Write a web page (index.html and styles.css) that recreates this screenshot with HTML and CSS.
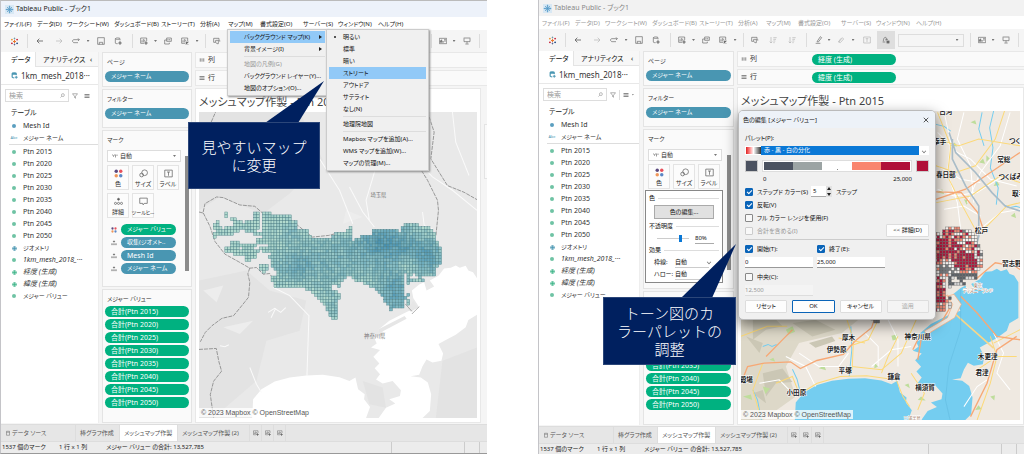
FILE: index.html
```html
<!DOCTYPE html>
<html lang="ja">
<head>
<meta charset="utf-8">
<title>Tableau Public - ブック1</title>
<link rel="stylesheet" href="styles.css">
</head>
<body>
<svg class="defs" aria-hidden="true">
  <symbol id="logo" viewBox="0 0 12 12"><g stroke-width="1.3" fill="none"><path d="M6 4v4M4 6h4" stroke="#e8762c"/><path d="M6 .8v2.4M5 2h2" stroke="#7099a5"/><path d="M6 8.8v2.4M5 10h2" stroke="#5b6591"/><path d="M2.5 2.5v2M1.5 3.5h2" stroke="#eb912c"/><path d="M9.5 2.5v2M8.500 3.500h2" stroke="#c72035"/><path d="M2.500 7.500v2M1.500 8.500h2" stroke="#c72035"/><path d="M9.500 7.500v2M8.500 8.500h2" stroke="#1f457e"/></g></symbol>
  <symbol id="app" viewBox="0 0 12 12"><path d="M0 0h12v12H0z" fill="#d8e8f4" stroke="none"/><g stroke="#4f97c5" fill="none"><circle cx="6" cy="6" r="3.500" stroke-dasharray="1.500 1"/><path d="M6 1v10M1 6h10M3 3l6 6M9 3l-6 6"/></g></symbol>
  <symbol id="back" viewBox="0 0 12 12"><path d="M10.500 6h-9M5 2.500L1.500 6 5 9.500" stroke-width="1.300"/></symbol>
  <symbol id="fwd" viewBox="0 0 12 12"><path d="M1.500 6h9M7 2.500L10.500 6 7 9.500"/></symbol>
  <symbol id="replay" viewBox="0 0 12 12"><path d="M9 8.500H2.500L1 7V5l1.500-1H11M9 2l2 2-2 2"/></symbol>
  <symbol id="save" viewBox="0 0 12 12"><path d="M1 1h10v10H1zM3.500 11V8h5v3"/></symbol>
  <symbol id="datasrc" viewBox="0 0 12 12"><path d="M9 5V2.500C9 1 2 1 2 2.500V9c0 1 2 1 3.500 1M2 2.500C2 4 9 4 9 2.500"/><path d="M9 6.500v5M6.500 9h5" stroke-width="1.600"/></symbol>
  <symbol id="newsheet" viewBox="0 0 12 12"><path d="M6 9.500H1v-8h9V6M3 8V5M5 8V3M7 7V4"/><path d="M9 6.500v5M6.500 9h5" stroke-width="1.600"/></symbol>
  <symbol id="dup" viewBox="0 0 12 12"><path d="M4 1.500h7v5H4zM1 4.500v6h7v-2M1 4.500h3M6 5V3M8.500 5V3"/></symbol>
  <symbol id="clear" viewBox="0 0 12 12"><path d="M6 9.500H1v-8h9V6M3 8V5M5 8V3M7 6V4"/><path d="M7 7l4 4M11 7l-4 4" stroke-width="1.600"/></symbol>
  <symbol id="swap" viewBox="0 0 12 12"><path d="M1 2h8v4M1 2v6h3M4 5h4v5H6L4 8zM9 6l2 0"/></symbol>
  <symbol id="sort" viewBox="0 0 12 12"><path d="M3 1.500v9M1 8.500l2 2 2-2M6.500 2.500h5M6.500 5h4M6.500 7.500h3M6.500 10h2"/></symbol>
  <symbol id="pen" viewBox="0 0 12 12"><path d="M1 11h7M3 8.500L8 1l2 1.500L5 9z"/></symbol>
  <symbol id="clip" viewBox="0 0 12 12"><path d="M3 9L8 2.500l2 2L5 10 2 9l4-5.500"/></symbol>
  <symbol id="tbox" viewBox="0 0 12 12"><path d="M1 1.500h10v9H1zM4 4h4M6 4v5"/></symbol>
  <symbol id="fix" viewBox="0 0 12 12"><path d="M2 8c0-3 1-6 3-6s2 3 1 5M1 9h4M5 5h4"/><path d="M7 7l4 4M11 7l-4 4" stroke-width="2"/></symbol>
  <symbol id="cards" viewBox="0 0 12 12"><path d="M.5 2h11v8H.5z"/><path d="M2 8.500V5M4 8.500V4M6 8.500V6M8 4h2M8 6h2" stroke-width="1.500"/></symbol>
  <symbol id="present" viewBox="0 0 12 12"><path d="M1 1.500h10M1.500 2v5h9V2M6 7v3M3.500 10.500h5"/></symbol>
  <symbol id="filter" viewBox="0 0 12 12"><path d="M1 1.500h10L7 6.500v4l-2-1.500V6.500z"/></symbol>
  <symbol id="search" viewBox="0 0 12 12"><circle cx="7" cy="5" r="3.500"/><path d="M4.500 7.500L1 11"/></symbol>
  <symbol id="listico" viewBox="0 0 12 12"><path d="M1 3h10M1 6h10M1 9h10" stroke-width="1.500"/></symbol>
  <symbol id="colico" viewBox="0 0 12 12"><path d="M2.500 3v6M6 3v6M9.500 3v6" stroke-width="2" stroke-dasharray="2.500 1"/></symbol>
  <symbol id="dots4" viewBox="0 0 12 12"><g stroke="none"><circle cx="3" cy="3" r="2.300" fill="#5b4a7f"/><circle cx="9" cy="3" r="2.300" fill="#e8505b"/><circle cx="3" cy="9" r="2.300" fill="#f0975a"/><circle cx="9" cy="9" r="2.300" fill="#5a86c5"/></g></symbol>
  <symbol id="size" viewBox="0 0 12 12"><circle cx="7.500" cy="5" r="3.800"/><circle cx="3.500" cy="8" r="2.500"/></symbol>
  <symbol id="detail" viewBox="0 0 12 12"><circle cx="6" cy="3" r="1.300" fill="#555"/><circle cx="2" cy="8.500" r="1.400"/><circle cx="6" cy="8.500" r="1.400"/><circle cx="10" cy="8.500" r="1.400"/></symbol>
  <symbol id="tip" viewBox="0 0 12 12"><path d="M1 1.500h10v7H7L5.500 10.500 5 8.500H1z"/></symbol>
  <symbol id="auto" viewBox="0 0 12 12"><path d="M1 3l2 4 2-4M7 9V3M10 3v3" stroke-width="1.300"/></symbol>
  <symbol id="globe" viewBox="0 0 12 12"><circle cx="6" cy="6" r="4.500"/><path d="M1.500 6h9M6 1.500v9"/></symbol>
  <symbol id="cyl" viewBox="0 0 12 12"><path d="M3 2.500h6v8H3zM3 4.500h6"/></symbol>
</svg>

<main class="desk">

<!-- ================= map menu ================= -->
<section class="win first">
  <header class="titlebar"><svg class="i9"><use href="#app"/></svg>Tableau Public - ブック1</header>
  <nav class="menubar"><span class="mn1">ファイル(F)</span><span class="mn2">データ(D)</span><span class="mn3">ワークシート(W)</span><span class="mn4">ダッシュボード(B)</span><span class="mn5">ストーリー(T)</span><span class="mn6">分析(A)</span><span class="mn7">マップ(M)</span><span class="mn8">書式設定(O)</span><span class="mn9">サーバー(S)</span><span class="mn10">ウィンドウ(N)</span><span>ヘルプ(H)</span></nav>
  <div class="toolbar">
    <svg class="i9"><use href="#logo"/></svg><i class="sep"></i><svg><use href="#back"/></svg><svg class="dim"><use href="#fwd"/></svg><svg><use href="#replay"/></svg><i class="caret"></i><svg><use href="#save"/></svg><svg><use href="#datasrc"/></svg><i class="sep"></i><svg><use href="#newsheet"/></svg><i class="caret"></i><svg><use href="#dup"/></svg><svg><use href="#clear"/></svg><i class="caret"></i><i class="sep"></i><svg><use href="#swap"/></svg><svg class="dim"><use href="#sort"/></svg><svg class="dim"><use href="#sort"/></svg><i class="sep"></i><svg><use href="#pen"/></svg><i class="caret"></i><svg class="dim"><use href="#clip"/></svg><i class="caret"></i><svg class="dim"><use href="#tbox"/></svg><svg><use href="#fix"/></svg><span class="combo"></span><i class="sep"></i><svg><use href="#cards"/></svg><i class="caret"></i><svg><use href="#present"/></svg><i class="sep"></i>
  </div>
  <div class="work">
    <aside class="data">
      <div class="dtabs"><b>データ</b><span>アナリティクス</span><em>‹</em></div>
      <div class="source"><svg class="i7 blue"><use href="#datasrc"/></svg>1km_mesh_2018···</div>
      <div class="find"><div class="searchbox"><input type="text" placeholder="検索" aria-label="検索"><svg class="i5"><use href="#search"/></svg></div><svg class="i6"><use href="#filter"/></svg><i class="bar"></i><svg class="i6"><use href="#listico"/></svg><i class="caret"></i></div>
      <h2>テーブル</h2>
      <ul class="fields dims"><li><i class="dot bl"></i>Mesh Id</li><li class="kana"><small>Abc</small>メジャー ネーム</li></ul>
      <ul class="fields"><li><i class="dot"></i>Ptn 2015</li><li><i class="dot"></i>Ptn 2020</li><li><i class="dot"></i>Ptn 2025</li><li><i class="dot"></i>Ptn 2030</li><li><i class="dot"></i>Ptn 2035</li><li><i class="dot"></i>Ptn 2040</li><li><i class="dot"></i>Ptn 2045</li><li><i class="dot"></i>Ptn 2050</li><li class="kana"><svg class="i5 blue"><use href="#globe"/></svg>ジオメトリ</li><li class="it"><i class="dot"></i>1km_mesh_2018_···</li><li class="it"><svg class="i5 green"><use href="#globe"/></svg>経度 (生成)</li><li class="it"><svg class="i5 green"><use href="#globe"/></svg>緯度 (生成)</li><li class="kana"><i class="dot"></i>メジャー バリュー</li></ul>
    </aside>
    <div class="cards">
      <section class="card"><h3>ページ</h3><span class="pill bl">メジャー ネーム</span></section>
      <section class="card filt"><h3>フィルター</h3><span class="pill bl">メジャー ネーム</span></section>
      <section class="card marks"><h3>マーク</h3>
        <div class="mbody">
          <label class="mtype"><svg class="i6"><use href="#auto"/></svg><select aria-label="マークの種類"><option>自動</option></select><i class="caret"></i></label>
          <div class="mbtns"><button><svg><use href="#dots4"/></svg>色</button><button><svg><use href="#size"/></svg>サイズ</button><button><svg><use href="#tbox"/></svg>ラベル</button><button><svg><use href="#detail"/></svg>詳細</button><button class="long"><svg><use href="#tip"/></svg>ツールヒ…</button></div>
          <ul class="mpills"><li><svg class="i6"><use href="#dots4"/></svg><span class="pill">メジャー バリュー</span></li><li><svg class="i6"><use href="#detail"/></svg><span class="pill bl">収集(ジオメト..</span></li><li><svg class="i6"><use href="#detail"/></svg><span class="pill bl lat">Mesh Id</span></li><li><svg class="i6"><use href="#detail"/></svg><span class="pill bl">メジャー ネーム</span></li></ul>
        </div>
        <i class="scroll"></i>
      </section>
      <section class="card values"><h3>メジャー バリュー</h3><span class="pill lat">合計(Ptn 2015)</span><span class="pill lat">合計(Ptn 2020)</span><span class="pill lat">合計(Ptn 2025)</span><span class="pill lat">合計(Ptn 2030)</span><span class="pill lat">合計(Ptn 2035)</span><span class="pill lat">合計(Ptn 2040)</span><span class="pill lat">合計(Ptn 2045)</span><span class="pill lat">合計(Ptn 2050)</span></section>
    </div>
    <div class="view">
      <div class="shelf"><svg class="i6"><use href="#colico"/></svg>列</div>
      <div class="shelf"><svg class="i6"><use href="#listico"/></svg>行</div>
      <div class="viewrow">
        <section class="sheet"><h1>メッシュマップ作製 - Ptn 2015</h1>
          <div class="mapbox">
            <svg class="map gray" viewBox="27 -204 837 915" preserveAspectRatio="none">
              <defs>
                <g id="sea"><path d="M865 295L852 275 838 270 830 256 812 262 800 255 785 262 765 264 748 286 722 300 735 318 712 330 705 305 690 312 668 330 672 352 690 380 660 390 640 400 600 420 566 448 590 456 555 472 562 488 545 500 572 508 552 528 570 548 556 562 572 580 560 596 580 608 610 600 635 628 632 645 600 655 618 668 590 680 568 711H700L722 690 726 640 716 605 695 590 664 586 690 582 700 556 712 536 730 545 757 540 762 518 748 490 770 478 800 462 830 440 838 418 865 402z"/><path d="M187 711L190 655 215 625 255 602 300 590 350 584 400 582 450 589 480 600 498 590 506 625 526 640 524 655 542 678 530 711z"/></g>
                <path id="tama" d="M655 385l10 8 20-12-12-20-8 10zM566 446l80-40 6 8-80 42z"/>
              </defs>
              <rect x="27" y="-204" width="837" height="915" fill="#e9e9e9"/>
              <g fill="#e3e3e3"><path d="M27-204H330L400-60 300 40 220 100 90 50 27 90zM27 300L170 270 240 330 350 360 330 450 230 480 200 600 70 711H27zM760 540L864 500V711H740zM520 600l60 20 10 60-50-10z"/></g>
              <g fill="#ededed"><path d="M40 330l60-15-20 50zM100 440l90-20-40 40zM620-150l80 40-30 60zM470 90l50 20-60 20z"/></g>
              <use href="#sea" fill="#fff"/><use href="#tama" fill="#e6e6e6"/>
              <g fill="none" stroke="#fafafa" stroke-width="3"><path d="M250 320L300 345 358 405 352 585M480 20L520 95 555 140M560-40l-30 100 10 60M700 95l5 40 25 10M180 560l20 50 15 25M235 395l20-12 18 12 15-14M258 383l-14 28M90 495l15 3 12-6M650-190l20 120 60 60 60 40 74 60M380-80l70 110 40 100M790-204l10 90 40 100"/></g>
              <g fill="none" stroke="#888" stroke-width="2.500" stroke-dasharray="12 3"><path d="M27-150l35-20 15-34M27 95l12 3 6-28 35-20 20 2 50 22 45 4 30 26M40 98l20 40 15 45 30 38 40 22 35 20 20-2 20 20 20-2 20 35 30 2M180 262l-6 18 6 25-4 45-20 25-25 30-35 8-30 22-20 20-15 28M27 506l52-3 8 40 8 28-24 30-10 40 10 69M318 130l50 40 50-5 30-8M665-80l50 80 30 60 3 30-8 78M715-204l20 60-10 80 50 80 50 20 39 22"/></g>
              <path d="M648 370l20 22M690 378l-22 22" stroke="#888" stroke-width="2"/>
              <g class="mesh" data-palette="teal"></g>
              <text x="543" y="49" class="glabel">埼玉県</text><text x="524" y="473" class="glabel">神奈川県</text>
            </svg>
            <small class="credit">© 2023 Mapbox © OpenStreetMap</small>
          </div>
        </section>
        <div class="side"><i></i></div>
      </div>
    </div>
  </div>
  <footer class="tabs"><span class="ds"><svg class="i6"><use href="#cyl"/></svg>データ ソース</span><span class="t1">棒グラフ作成</span><span class="on">メッシュマップ作製</span><span class="t3">メッシュマップ作製 (2)</span><span class="new"><svg><use href="#newsheet"/></svg></span><span class="new"><svg><use href="#newsheet"/></svg></span><span class="new"><svg><use href="#newsheet"/></svg></span></footer>
  <footer class="status"><span>1537 個のマーク</span><span>1 行 x 1 列</span><span>メジャー バリュー の合計: 13,527,785</span><i></i><i></i><i></i></footer>

  <div class="menu main"><button class="hot">バックグラウンド マップ(K)<em></em></button><button>背景イメージ(I)<em></em></button><hr><button disabled>地図の凡例(G)</button><button>バックグラウンド レイヤー(Y)...</button><button>地図のオプション(O)...</button></div>
  <div class="menu sub"><button class="cur">明るい</button><button>標準</button><button>暗い</button><button class="hot">ストリート</button><button>アウトドア</button><button>サテライト</button><button>なし(N)</button><hr><button>地理院地図</button><hr><button>Mapbox マップを追加(A)...</button><button>WMS マップを追加(W)...</button><button>マップの管理(M)...</button></div>
  <svg class="pointer p1" viewBox="0 0 60 42"><path d="M0 42L59 0 33 42z"/></svg>
  <p class="callout c1">見やすいマップ<br>に変更</p>
</section>

<!-- ================= colour dialog ================= -->
<section class="win second">
  <header class="titlebar"><svg class="i9"><use href="#app"/></svg>Tableau Public - ブック1</header>
  <nav class="menubar"><span class="mn1">ファイル(F)</span><span class="mn2">データ(D)</span><span class="mn3">ワークシート(W)</span><span class="mn4">ダッシュボード(B)</span><span class="mn5">ストーリー(T)</span><span class="mn6">分析(A)</span><span class="mn7">マップ(M)</span><span class="mn8">書式設定(O)</span><span class="mn9">サーバー(S)</span><span class="mn10">ウィンドウ(N)</span><span>ヘルプ(H)</span></nav>
  <div class="toolbar">
    <svg class="i9"><use href="#logo"/></svg><i class="sep"></i><svg><use href="#back"/></svg><svg class="dim"><use href="#fwd"/></svg><svg><use href="#replay"/></svg><i class="caret"></i><svg><use href="#save"/></svg><svg><use href="#datasrc"/></svg><i class="sep"></i><svg><use href="#newsheet"/></svg><i class="caret"></i><svg><use href="#dup"/></svg><svg><use href="#clear"/></svg><i class="caret"></i><i class="sep"></i><svg><use href="#swap"/></svg><svg class="dim"><use href="#sort"/></svg><svg class="dim"><use href="#sort"/></svg><i class="sep"></i><svg><use href="#pen"/></svg><i class="caret"></i><svg class="dim"><use href="#clip"/></svg><i class="caret"></i><svg class="dim"><use href="#tbox"/></svg><span class="picked"><svg><use href="#fix"/></svg></span><span class="combo"><i class="caret"></i></span><i class="sep"></i><svg><use href="#cards"/></svg><i class="caret"></i><svg><use href="#present"/></svg><i class="sep"></i>
  </div>
  <div class="work">
    <aside class="data">
      <div class="dtabs"><b>データ</b><span>アナリティクス</span><em>‹</em></div>
      <div class="source"><svg class="i7 blue"><use href="#datasrc"/></svg>1km_mesh_2018···</div>
      <div class="find"><div class="searchbox"><input type="text" placeholder="検索" aria-label="検索"><svg class="i5"><use href="#search"/></svg></div><svg class="i6"><use href="#filter"/></svg><i class="bar"></i><svg class="i6"><use href="#listico"/></svg><i class="caret"></i></div>
      <h2>テーブル</h2>
      <ul class="fields dims"><li><i class="dot bl"></i>Mesh Id</li><li class="kana"><small>Abc</small>メジャー ネーム</li></ul>
      <ul class="fields"><li><i class="dot"></i>Ptn 2015</li><li><i class="dot"></i>Ptn 2020</li><li><i class="dot"></i>Ptn 2025</li><li><i class="dot"></i>Ptn 2030</li><li><i class="dot"></i>Ptn 2035</li><li><i class="dot"></i>Ptn 2040</li><li><i class="dot"></i>Ptn 2045</li><li><i class="dot"></i>Ptn 2050</li><li class="kana"><svg class="i5 blue"><use href="#globe"/></svg>ジオメトリ</li><li class="it"><i class="dot"></i>1km_mesh_2018_···</li><li class="it"><svg class="i5 green"><use href="#globe"/></svg>経度 (生成)</li><li class="it"><svg class="i5 green"><use href="#globe"/></svg>緯度 (生成)</li><li class="kana"><i class="dot"></i>メジャー バリュー</li></ul>
    </aside>
    <div class="cards">
      <section class="card"><h3>ページ</h3><span class="pill bl">メジャー ネーム</span></section>
      <section class="card filt"><h3>フィルター</h3><span class="pill bl">メジャー ネーム</span></section>
      <section class="card marks"><h3>マーク</h3>
        <div class="mbody">
          <label class="mtype"><svg class="i6"><use href="#auto"/></svg><select aria-label="マークの種類"><option>自動</option></select><i class="caret"></i></label>
          <div class="mbtns"><button><svg><use href="#dots4"/></svg>色</button><button><svg><use href="#size"/></svg>サイズ</button><button><svg><use href="#tbox"/></svg>ラベル</button></div>
        </div>
        <i class="scroll"></i>
      </section>
      <section class="card values"><h3>メジャー バリュー</h3><span class="pill lat">合計(Ptn 2015)</span><span class="pill lat">合計(Ptn 2020)</span><span class="pill lat">合計(Ptn 2025)</span><span class="pill lat">合計(Ptn 2030)</span><span class="pill lat">合計(Ptn 2035)</span><span class="pill lat">合計(Ptn 2040)</span><span class="pill lat">合計(Ptn 2045)</span><span class="pill lat">合計(Ptn 2050)</span></section>
    </div>
    <div class="view">
      <div class="shelf"><svg class="i6"><use href="#colico"/></svg>列<span class="pill lat">経度 (生成)</span></div>
      <div class="shelf"><svg class="i6"><use href="#listico"/></svg>行<span class="pill lat">緯度 (生成)</span></div>
      <div class="viewrow">
        <section class="sheet"><h1>メッシュマップ作製 - Ptn 2015</h1>
          <div class="mapbox">
            <svg class="map" viewBox="24 -564 846 924" preserveAspectRatio="none">
              <rect x="24" y="-564" width="846" height="924" fill="#efe9e1"/>
              <path d="M24-50H420L380 60 330 100 200 130 160 200 190 290 90 360H24z" fill="#ddd8c8"/>
              <g fill="#cbc7b5"><path d="M60 60l60-10 30 30-50 10-40 30zM180 70l70-10 60 30-70 20zM40 110l50 20-10 30zM230 130l70-20 10 14-60 20zM90 220l60-14 30 40-50 4-30 40zM60 280l30-10 10 40z"/></g>
              <g fill="#bedd9b"><path d="M160 90l20-10 8 16-20 8zM260 205l16-8 6 14zM90 260l22 6-14 16zM480 108l16-4 4 14-16 4zM430 190l10 10-12 6zM30 290l24-6 4 16zM620-320l14-10 6 14zM746-410l12-12 6 16zM768-432l10 10-10 10zM700-300l16 4-8 12zM842-250l12-10 4 16zM790-340l10-16 8 14zM660-460l12-10 8 12zM720-530l14-6 4 12zM560 300l10-10 14 12zM520 255l12-4 4 14zM780 290l14-4-2 16zM734 330l10-14 10 12zM110 180l12-6 6 12z"/></g>
              <use href="#sea" fill="#74cdf0" transform="translate(0 -347)"/>
              <g fill="none" stroke="#74cdf0" stroke-width="3"><path d="M357 80L360 150 352 230M180 208l14 30 10 40M60 270l14 30 12 60M90 140l16-6 12 6 14-6M822-283l16 8 20-4 12 4M790-564l-12 50 10 60-8 60 24 60-6 50M590-530l50 12 20 14M755-560l-10 50 16 50"/></g>
              <g fill="none" stroke="#fff" stroke-width="3"><path d="M620-500l60 60 40 20 60 60 80 20M620-400l70 40 60 10M640-560l20 90-10 90 30 90 10 80M700-560l-20 80 40 80 10 110M620-330l50 20 70-10 80-50M840-560l-30 100-60 80-40 90M760-220l50-40 60-10M200 160l60 40 60 0 30-40M250 260l-30-60-60-30M400 100l40 40 0 60M470 60l30 60 0 80M420 200l60-50 60-10M640-270l60-10 50 30M700 320l40-60 30-20M790 100l30 60-20 60 40 50M80 250l60-10 30 30 20 20"/></g>
              <g fill="none" stroke="#fcd978" stroke-width="3"><path d="M205 280l50-30 70-20 80-2 60 8 30 4 20 50 20 30M345 60l20 60-4 90M360 200l90 10 60-50 50-110M440 60l-30 60-60 20M500 110l-30 60-20 50M615-480l70 20 60-20 125 20M620-560l40 100-10 90 40 80 50 90M870-350l-60-20-90 60-104 20M615-400l60 20 60-20 60-80 30-90M130 250l50-20 20 50M90 190l-30 80 20 70M740 360l40-110 20-80-20-60M790 130l80-40M740 210l60-40 60 0M560 330l20-50-40-60M720-190l50-30 60-60 40-10M24 110l80-30 60 0M320 115l80 15"/></g>
              <g fill="none" stroke="#f7a875" stroke-width="4"><path d="M24 250l20-50 50-10 80-4 30 20 50-24 80-18 36-40 50-40 20-60M616-322l76 2 50 60 20 60M615-300l90-30 90-60 75-50M735-60l60-50 60 10 15 10M560 180l10-60 60-50 30-50M690-10l50 50 60 70 70 10M720 350l50-100 30-100 60-40M545 150l20-40M180 90l-20 20-60 60"/></g>
              <g fill="none" stroke="#a9bcc8" stroke-width="5"><path d="M655-500l20 60 60 60 50 60 40 40 45 15M665-480l0 60 40 80 40 60 0 90-16 60"/></g>
              <path d="M672 42L790 145" stroke="#f7d68a" stroke-width="5"/>
              <path d="M690-30v120l-36 110-10 100 14 60" fill="none" stroke="#5fb9dc" stroke-width="1.500"/>
              <g fill="#efe9e1" stroke="#f7a875" stroke-width="2"><path d="M580 94l70-40 16-40-16-24 20-6 22 30-20 40-84 50zM640 20l20-20-10-14-14 10z"/></g>
              <g class="mesh" data-palette="red" transform="translate(0 -347)"></g>
              <g class="places" text-anchor="middle">
                <text x="645" y="-556">古河</text><text x="627" y="-466">幸手</text><text x="645" y="-368">春日部</text><text x="821" y="-413">常総</text><text x="864" y="-467">つくば</text><text x="860" y="-360">つくばみらい</text><text x="866" y="-311">取手</text><text x="753" y="-198">松戸</text><text x="845" y="-101">習志野</text>
                <text x="350" y="121">厚木</text><text x="314" y="157">伊勢原</text><text x="340" y="220">平塚</text><text x="488" y="236">鎌倉</text><text x="582" y="270">横須賀</text><text x="192" y="285">小田原</text><text x="30" y="245">御殿場</text><text x="560" y="118">神奈川県</text><text x="772" y="178">木更津</text><text x="755" y="225">君津</text>
                <text x="742" y="-39" class="poi">東京</text><text x="742" y="-23" class="poi">ディズニーランド</text><text x="543" y="359" class="poi">三浦半島</text>
              </g>
            </svg>
            <small class="credit">© 2023 Mapbox © OpenStreetMap</small>
          </div>
        </section>
      </div>
    </div>
  </div>
  <footer class="tabs"><span class="ds"><svg class="i6"><use href="#cyl"/></svg>データ ソース</span><span class="t1">棒グラフ作成</span><span class="on">メッシュマップ作製</span><span class="t3">メッシュマップ作製 (2)</span><span class="new"><svg><use href="#newsheet"/></svg></span><span class="new"><svg><use href="#newsheet"/></svg></span><span class="new"><svg><use href="#newsheet"/></svg></span></footer>
  <footer class="status"><span>1537 個のマーク</span><span>1 行 x 1 列</span><span>メジャー バリュー の合計: 13,527,785</span><i></i><i></i><i></i></footer>

  <div class="popup">
    <div class="legend">色</div>
    <button class="edit">色の編集...</button>
    <div class="legend"><label for="op">不透明度</label></div>
    <div class="oprow"><input id="op" type="range" value="75"><input type="text" value="80%" aria-label="不透明度の値"></div>
    <div class="legend">効果</div>
    <div class="fx"><label for="bd">枠線:</label><select id="bd"><option>自動</option></select><i class="chev"></i></div>
    <div class="fx"><label for="ha">ハロー:</label><select id="ha"><option>自動</option></select><i class="chev"></i></div>
  </div>

  <div class="dialog" role="dialog" aria-labelledby="dt">
    <header><span id="dt">色の編集 [メジャー バリュー]</span><button aria-label="閉じる"><svg viewBox="0 0 8 8"><path d="M1 1l6 6M7 1L1 7"/></svg></button></header>
    <div class="dbody">
      <label for="pal">パレット(P):</label>
      <div class="palette"><i class="ramp"></i><select id="pal"><option>赤 - 黒 - 白の分化</option></select><i class="chev"></i></div>
      <div class="swatches"><i class="lo"></i><div class="steps"><i></i><i></i><i></i><i></i><i></i></div><i class="hi"></i></div>
      <div class="limits"><span>0</span><span>25,000</span></div>
      <div class="checks">
        <div><label><input type="checkbox" checked>ステップド カラー(S)</label><input class="num" type="number" value="5" aria-label="ステップ数"><i class="spin"></i><span>ステップ</span></div>
        <div><label><input type="checkbox" checked>反転(V)</label></div>
        <div><label><input type="checkbox">フル カラー レンジを使用(F)</label></div>
        <div><label class="off"><input type="checkbox" disabled>合計を含める(I)</label><button class="btn">&lt;&lt; 詳細(D)</button></div>
      </div>
      <hr>
      <div class="range">
        <label><input type="checkbox" checked>開始(T):</label><label><input type="checkbox" checked>終了(E):</label>
        <input type="text" value="0" aria-label="開始"><input type="text" value="25,000" aria-label="終了">
        <label><input type="checkbox">中央(C):</label><span></span>
        <input type="text" value="12,500" disabled aria-label="中央">
      </div>
      <div class="actions"><button class="btn">リセット</button><button class="btn ok">OK</button><button class="btn">キャンセル</button><button class="btn" disabled>適用</button></div>
    </div>
  </div>
  <svg class="pointer p2" viewBox="0 0 56 54"><path d="M0 54L55 0 31 54z"/></svg>
  <p class="callout c2">トーン図のカ<br>ラーパレットの<br>調整</p>
</section>
</main>
<script src="mesh.js"></script>
</body>
</html>
```
FILE: styles.css
```css
* { box-sizing: border-box; }
body, h1, h2, h3, p, ul { margin: 0; padding: 0; font-weight: 400; }
ul { list-style: none; }
body {
  background: #fff;
  color: #333;
  font: 6px/12px "Noto Sans", "Noto Sans CJK JP", sans-serif;
  font-feature-settings: "palt";
}
button, input, select {
  font: inherit;
  font-feature-settings: inherit;
  color: inherit;
  margin: 0;
  padding: 0;
  border: 0;
  border-radius: 0;
  background: none;
  appearance: none;
  min-width: 0;
}
i, em { font-style: normal; }
svg { display: block; fill: none; stroke: #666; width: 8px; height: 8px; flex: none; }
.defs { position: absolute; width: 0; height: 0; }
.i5 { width: 5px; height: 5px; }
.i6 { width: 6px; height: 6px; }
.i7 { width: 7px; height: 7px; }
.i9 { width: 9px; height: 9px; }
.blue { stroke: #4996b2; stroke-width: 2; }
.green { stroke: #3eb489; stroke-width: 2; }
.dim { opacity: .45; }
.caret {
  width: 3px;
  height: 2px;
  background: #777;
  clip-path: polygon(0 0, 100% 0, 50% 100%);
}

.desk { display: grid; grid-template-columns: 487fr 51px 486fr; min-height: 100vh; }
.win {
  position: relative;
  display: flex;
  flex-direction: column;
  background: #f5f5f5;
  border-left: 1px solid #c4c4c8;
  white-space: nowrap;
}
.first { border-top: 1px solid #bbb; border-bottom: 1px solid #999; }
.second { grid-column: 3; }

.titlebar { display: flex; align-items: center; gap: 2px; height: 16px; padding-left: 4px; background: #edf2fa; color: #222; font-size: 7px; }
.second .titlebar { background: #f2f2f2; color: #888; }
.menubar { display: flex; align-items: center; height: 13px; padding-left: 3px; background: #fff; color: #222; }
.second .menubar { color: #999; }
.menubar span { flex: none; }
.mn1 { width: 33px; }
.mn2 { width: 30px; }
.mn3, .mn4 { width: 47px; }
.mn5 { width: 39px; }
.mn6 { width: 28px; }
.mn7 { width: 32px; }
.mn8 { width: 43px; }
.mn9 { width: 35px; }
.mn10 { width: 40px; }

.toolbar {
  display: grid;
  grid-template-columns: 18px 8px 18px 19px 16px 8px 17px 18px 10px 14px 9px 16px 17px 8px 9px 14px 21px 18px 11px 13px 8px 16px 8px 19px 19px 1fr 8px 15px 8px 18px 7px;
  place-items: center;
  height: 22px;
  padding: 0 2px 0 4px;
}
.first .toolbar { padding-right: 4px; }
.toolbar .sep { width: 1px; height: 14px; background: #ddd; }
.picked { display: grid; place-items: center; width: 18px; height: 18px; background: #dedede; }
.combo { display: flex; align-items: center; justify-content: flex-end; width: 66px; height: 13px; padding-right: 4px; border: 1px solid #ddd; }

.work { flex: 1; display: grid; grid-template-columns: 98px 90px 1fr; column-gap: 3px; min-height: 0; }
.second .work { grid-template-columns: 101px 91px 1fr; }
.data { background: #fff; border-right: 1px solid #eee; }
.dtabs { display: flex; height: 15px; font-size: 7px; line-height: 15px; color: #111; }
.dtabs b { width: 34px; padding-left: 10px; font-weight: 400; }
.dtabs span { flex: 1; padding-left: 7px; background: #f7f7f7; border-left: 1px solid #e4e4e4; border-bottom: 1px solid #e4e4e4; }
.dtabs em { width: 8px; background: #f7f7f7; border-bottom: 1px solid #e4e4e4; }
.source { display: flex; align-items: center; gap: 3px; height: 18px; padding-left: 10px; border-bottom: 1px solid #e8e8e8; font-size: 8px; }
.find { display: flex; align-items: center; gap: 3px; height: 13px; margin: 4px 5px 4px 4px; }
.searchbox { display: flex; align-items: center; width: 64px; height: 13px; padding: 0 3px; border: 1px solid #ddd; }
.searchbox input { flex: 1; height: 11px; font-size: 7px; }
.searchbox input::placeholder { color: #999; }
.bar { width: 1px; height: 10px; background: #ddd; }
.data h2 { padding-left: 10px; font-size: 7px; line-height: 14px; color: #222; }
.fields { padding-top: 1px; }
.dims { margin: 0 0 0 8px; padding: 0; border-bottom: 1px solid #ddd; }
.dims + .fields { padding-left: 8px; }
.fields li { display: grid; grid-template-columns: 10px 1fr; column-gap: 4px; align-items: center; justify-items: start; height: 12px; font-size: 7px; }
.fields .kana { font-size: 6px; }
.fields li > :first-child { justify-self: center; }
.fields small { font-size: 4px; color: #4996b2; }
.it { font-style: italic; }
.dot { width: 4px; height: 4px; border-radius: 2px; background: #6fc3a4; }
.dot.bl { background: #5b9fc0; }

.cards { display: flex; flex-direction: column; gap: 2px; min-height: 0; }
.card { flex: none; height: 35px; padding: 2px; background: #fafafa; border: 1px solid #e4e4e4; }
.card h3 { padding-left: 2px; font-size: 6px; line-height: 14px; }
.card.filt { height: 39px; }
.pill { display: block; height: 11px; margin-bottom: 2px; padding-left: 6px; border-radius: 6px; background: #00b180; color: #fff; line-height: 11px; overflow: hidden; }
.pill.bl { background: #4996b2; }
.pill.lat { font-size: 7px; }
.card > .pill { margin-top: 2px; }
.values > .pill { margin-top: 0; }
.values { flex: 1; overflow: hidden; }
.marks { position: relative; height: 157px; }
.second .marks { height: 160px; }
.mbody { width: 76px; padding: 3px 0 0 2px; }
.mtype { display: flex; align-items: center; gap: 2px; height: 12px; padding: 0 4px; background: #fff; border: 1px solid #ddd; }
.mtype select { flex: 1; height: 10px; line-height: 10px; }
.mbtns { display: grid; grid-template-columns: repeat(3, 22px); gap: 3px; padding: 3px 0 5px; }
.mbtns button { display: flex; flex-direction: column; align-items: center; justify-content: space-between; height: 25px; padding-top: 3px; border: 1px solid #e4e4e4; background: #fcfcfc; line-height: 9px; }
.mbtns .long { font-size: 5px; }
.mbtns svg { width: 9px; height: 9px; }
.mpills li { display: grid; grid-template-columns: 14px 55px; align-items: center; height: 13px; }
.mpills svg { margin-left: 4px; }
.mpills .pill { margin: 0; }
.scroll { position: absolute; right: 2px; top: 25px; width: 4px; height: 115px; background: #8b8b8b; }

.view { display: flex; flex-direction: column; gap: 2px; min-width: 0; min-height: 0; }
.shelf { display: flex; flex: none; align-items: center; gap: 3px; height: 16px; padding-left: 3px; background: #fafafa; border: 1px solid #e8e8e8; border-right: 0; font-size: 7px; }
.shelf .pill { width: 84px; margin: 0 0 0 52px; }
.viewrow { flex: 1; display: flex; gap: 3px; min-height: 0; }
.sheet { flex: 1; display: flex; flex-direction: column; padding: 3px 3px 4px; min-width: 0; background: #fff; border: 1px solid #e8e8e8; }
.sheet h1 { font-size: 11px; line-height: 20px; color: #444; }
.mapbox { position: relative; flex: 1; min-height: 0; }
.map { position: absolute; width: 100%; height: 100%; stroke: none; }
.side { width: 3px; padding-top: 36px; }
.side i { display: block; height: 55px; border: 1px solid #e4e4e4; border-right: 0; background: #fafafa; }
.credit { position: absolute; left: 0; bottom: 1px; padding: 0 2px; background: rgba(255, 255, 255, .75); font: 7px/9px "Liberation Sans", sans-serif; color: #555; }
.glabel { font-size: 16px; fill: #777; }
.places { font-size: 20px; font-weight: 700; fill: #222; stroke: #fff; stroke-width: 3px; paint-order: stroke; }
.places .poi { font-size: 13px; font-weight: 400; fill: #a07860; }

.tabs { display: flex; height: 17px; margin-top: 1px; background: #e6e6e6; border-top: 1px solid #ddd; line-height: 16px; color: #555; }
.tabs span { flex: none; padding: 0 4px; border-right: 1px solid #ddd; }
.tabs .ds { display: flex; align-items: center; gap: 1px; width: 75px; }
.tabs .t1 { width: 44px; }
.tabs .on { width: 58px; background: #fff; }
.tabs .t3 { width: 72px; }
.tabs .new { display: grid; place-items: center; width: 12px; padding: 0; }
.new svg { width: 6px; height: 6px; }
.status { display: flex; height: 12px; padding-left: 1px; background: #ececec; border-top: 1px solid #ddd; line-height: 11px; color: #222; }
.status span:nth-child(1) { width: 57px; }
.status span:nth-child(2) { width: 47px; }
.status span:nth-child(3) { flex: 1; }
.status i { width: 15px; border-left: 1px solid #ccc; }
.status i:nth-child(4) { width: 73px; }
.status i:nth-child(6) { width: 8px; }
.second .status { height: 11px; }

.menu { position: absolute; padding: 1px 2px; background: #f0f0f0; border: 1px solid #ccc; box-shadow: 1px 1px 2px #888; color: #111; }
.menu button { position: relative; display: block; width: 100%; height: 12px; padding-left: 14px; text-align: left; line-height: 12px; white-space: nowrap; }
.menu.main { left: 226px; top: 28px; width: 101px; }
.menu.sub { left: 325px; top: 28px; width: 103px; }
.menu .hot { background: #91c9f7; }
.menu em { position: absolute; right: 3px; top: 4px; border: 2px solid transparent; border-left: 3px solid #222; border-right: 0; }
.menu .cur::before { content: ""; position: absolute; left: 5px; top: 5px; width: 2px; height: 2px; border-radius: 1px; background: #222; }
.menu hr { height: 1px; margin: 1px 0 1px 14px; border: 0; background: #ddd; }
.menu :disabled { color: #999; }

.callout { position: absolute; display: grid; place-content: center; background: #00205f; border: 1px solid #2b4679; color: #fff; font-size: 15px; font-weight: 300; line-height: 18px; text-align: center; font-feature-settings: normal; font-family: "Noto Sans CJK JP", sans-serif; }
.c1 { left: 187px; top: 121px; width: 132px; height: 67px; }
.c2 { left: 64px; top: 297px; width: 133px; height: 68px; }
.pointer { position: absolute; fill: #00205f; stroke: none; }
.p1 { left: 264px; top: 80px; width: 60px; height: 42px; }
.p2 { left: 142px; top: 244px; width: 56px; height: 54px; }

.popup { position: absolute; left: 106px; top: 190px; width: 78px; padding: 1px 3px 2px; background: #fff; border: 1px solid #888; color: #111; }
.legend { display: flex; align-items: center; gap: 3px; height: 12px; }
.legend::after { content: ""; flex: 1; height: 1px; background: #ddd; }
.edit { display: block; width: 60px; height: 14px; margin: 1px 0 1px 5px; border: 1px solid #aaa; background: #e1e1e1; line-height: 12px; }
.oprow { display: flex; align-items: center; gap: 6px; height: 12px; padding-left: 8px; }
.oprow input[type=range] { width: 32px; height: 8px; background: linear-gradient(#ccc, #ccc) center / 100% 1px no-repeat; }
.oprow input[type=range]::-webkit-slider-thumb { appearance: none; width: 3px; height: 7px; background: #0a78d6; }
.oprow input[type=text] { width: 19px; height: 11px; border-bottom: 1px solid #aaa; }
.fx { display: flex; align-items: center; height: 12px; padding-left: 5px; }
.fx label { width: 21px; }
.fx select { width: 34px; height: 11px; border-bottom: 1px solid #ccc; line-height: 10px; }
.chev { width: 4px; height: 4px; border: solid #777; border-width: 0 1px 1px 0; transform: rotate(45deg) scale(.8); }
.fx .chev { margin-left: -2px; }

.dialog { position: absolute; left: 199px; top: 110px; width: 198px; background: #f0f0f0; border: 1px solid #bbb; border-radius: 5px; box-shadow: 0 5px 14px rgba(0, 0, 0, .5); color: #111; overflow: hidden; }
.dialog header { display: flex; align-items: center; justify-content: space-between; height: 17px; padding: 0 6px 0 4px; background: #edf2f8; }
.dialog header svg { width: 6px; height: 6px; stroke: #222; }
.dbody { padding: 4px 6px 6px; }
.dbody label { display: inline-flex; align-items: center; gap: 4px; height: 12px; }
.palette { display: flex; align-items: center; height: 9px; margin: 2px 0 5px; background: #fff; }
.ramp { width: 15px; height: 7px; margin-left: 1px; background: linear-gradient(90deg, #d22, #f88, #fff, #999, #333); }
.palette select { flex: 1; height: 9px; padding-left: 3px; background: #0a78d6; color: #fff; line-height: 9px; }
.palette .chev { margin: 0 3px; }
.swatches { display: flex; justify-content: space-between; height: 12px; }
.swatches > i { width: 13px; border: 1px solid #ccc; }
.lo { background: #4b5260; }
.hi { background: #b01038; }
.steps { display: flex; width: 150px; padding: 1px; background: #fff; border: 1px solid #ddd; }
.steps i { flex: 1; }
.steps i:nth-child(1) { background: #4b5260; }
.steps i:nth-child(2) { background: #9ca4a4; }
.steps i:nth-child(3) { background: linear-gradient(#888, #888) center bottom / 1px 1px no-repeat; }
.steps i:nth-child(4) { background: #f9856e; }
.steps i:nth-child(5) { background: #b01038; }
.limits { display: flex; justify-content: space-between; padding: 1px 17px 0 18px; }
.checks > div { display: flex; align-items: center; height: 13px; }
.checks .btn { width: 43px; margin-left: auto; }
.off { color: #999; }
.dialog [type=checkbox] { display: grid; place-items: center; width: 8px; height: 8px; border: 1px solid #888; border-radius: 1px; background: #f8f8f8; }
.dialog [type=checkbox]:checked { background: #0a64b8; border-color: #0a64b8; }
.dialog [type=checkbox]:checked::after { content: ""; width: 4px; height: 2px; border: solid #fff; border-width: 0 0 1px 1px; transform: rotate(-45deg); }
.dialog [type=checkbox]:disabled { border-color: #ccc; }
.num { width: 15px; height: 11px; margin-left: 3px; padding-left: 2px; background: #fff; border-bottom: 1px solid #aaa; appearance: textfield; }
.num::-webkit-inner-spin-button { display: none; }
.spin { width: 6px; height: 11px; margin-right: 4px; background: #e2e2e2; position: relative; }
.spin::before, .spin::after { content: ""; position: absolute; left: 1px; top: 1px; border: 2px solid transparent; border-bottom: 3px solid #222; border-top: 0; }
.spin::after { top: 7px; transform: rotate(180deg); }
.dbody hr { height: 1px; margin: 2px 0; border: 0; background: #ccc; }
.range { display: grid; grid-template-columns: 68px 68px; column-gap: 4px; row-gap: 2px; }
.range label { height: 13px; }
.range input[type=text] { height: 11px; background: #fff; border-bottom: 1px solid #999; }
.range input:disabled { background: #f4f4f4; border-color: #ddd; color: #999; }
.actions { display: grid; grid-template-columns: repeat(4, 1fr); gap: 5px; margin-top: 4px; }
.btn { height: 13px; border: 1px solid #ddd; border-radius: 1px; background: #fdfdfd; line-height: 11px; }
.btn.ok { border-color: #0a64b8; }
.btn:disabled { color: #aaa; background: #f4f4f4; }
```
FILE: mesh.js
```js
// Covered spans of each mesh row, as pairs of start and end x.
const ROWS = [
  [108,117, 191,208, 218,243], [108,117, 191,208, 218,305], [126,143, 191,213, 218,305],
  [78,90, 135,160, 165,213, 218,318], [70,90, 130,212, 222,318, 648,690],
  [70,100, 108,205, 222,318, 480,488, 638,722], [75,150, 165,200, 222,355, 470,488, 550,625, 638,735],
  [70,130, 190,360, 432,488, 545,740], [70,80, 215,362, 430,488, 515,742],
  [200,215, 222,488, 497,742], [122,145, 200,750], [122,200, 232,750],
  [108,150, 155,195, 205,755], [108,210, 222,757], [130,200, 245,760], [165,200, 232,760],
  [170,185, 240,760], [240,757], [210,235, 242,745], [210,232, 250,740], [215,230, 258,742],
  [262,648, 655,670, 680,742], [246,470, 490,645, 650,663, 690,700],
  [246,465, 500,645, 650,663, 665,705], [250,455, 520,640, 650,660],
  [255,430, 445,452, 540,640], [350,430, 555,640], [362,440, 570,640],
  [372,455, 575,648, 650,665], [385,440, 445,455, 582,650], [390,440, 585,648, 655,665],
  [398,440, 592,645, 655,665], [410,440, 598,645], [413,440, 598,610], [420,442], [420,442], [424,442]
];
const CELL = 8.7, TOP = 95, LEFT = 70;
const noise = (a, b) => { const v = Math.sin(a * 12.9898 + b * 78.233) * 43758.5453; return v - Math.floor(v); };
const bump = (x, y, cx, cy, rx, ry) => Math.exp(-(((x - cx) / rx) ** 2 + ((y - cy) / ry) ** 2));
const density = (x, y) =>
  0.9 * bump(x, y, 580, 180, 80, 70) + 0.8 * bump(x, y, 700, 225, 70, 60) + 0.8 * bump(x, y, 610, 335, 50, 70) +
  0.45 * bump(x, y, 430, 235, 110, 80) + 0.5 * bump(x, y, 310, 250, 60, 50) + 0.35 * bump(x, y, 300, 150, 30, 30) -
  0.5 * bump(x, y, 650, 250, 35, 30) + 0.25 * bump(x, y, 430, 370, 40, 60);

function teal(x, y, n) {
  const t = Math.max(0, Math.min(1, density(x, y) * 0.85 + (n - 0.5) * 0.35));
  const mix = (a, b) => Math.round(a + (b - a) * t);
  return `rgb(${mix(178, 70)},${mix(218, 145)},${mix(206, 180)})`;
}
function red(x, y, n) {
  const t = 0.5 * bump(x, y, 690, 180, 110, 110) + 0.6 * bump(x, y, 630, 190, 45, 45) +
    0.65 * bump(x, y, 695, 235, 40, 30) + 0.8 * bump(x, y, 610, 330, 45, 60) -
    0.9 * bump(x, y, 645, 250, 25, 18) + (n - 0.5) * 0.7;
  if (y > 265 && x > 645) return n > 0.3 ? '#5c6268' : '#d8d8d8';
  return t > 0.72 ? '#b0183c' : t > 0.46 ? '#f08a74' : t > 0.12 ? '#f6f2ef' : '#777c80';
}

for (const g of document.querySelectorAll('.mesh')) {
  const isRed = g.dataset.palette === 'red';
  let out = '';
  ROWS.forEach((row, r) => {
    for (let k = 0; k < row.length; k += 2) {
      const a = Math.round((row[k] - LEFT) / CELL);
      const b = Math.max(a + 1, Math.round((row[k + 1] - LEFT) / CELL));
      for (let c = a; c < b; c++) {
        const x = LEFT + c * CELL, y = TOP + r * CELL;
        const fill = (isRed ? red : teal)(x, y, noise(c, r));
        out += `<rect x="${x.toFixed(1)}" y="${y.toFixed(1)}" width="${CELL}" height="${CELL}" fill="${fill}"/>`;
      }
    }
  });
  g.setAttribute('stroke', isRed ? '#666' : '#4c7f86');
  g.setAttribute('stroke-width', '1.2');
  g.innerHTML = out;
}
```
